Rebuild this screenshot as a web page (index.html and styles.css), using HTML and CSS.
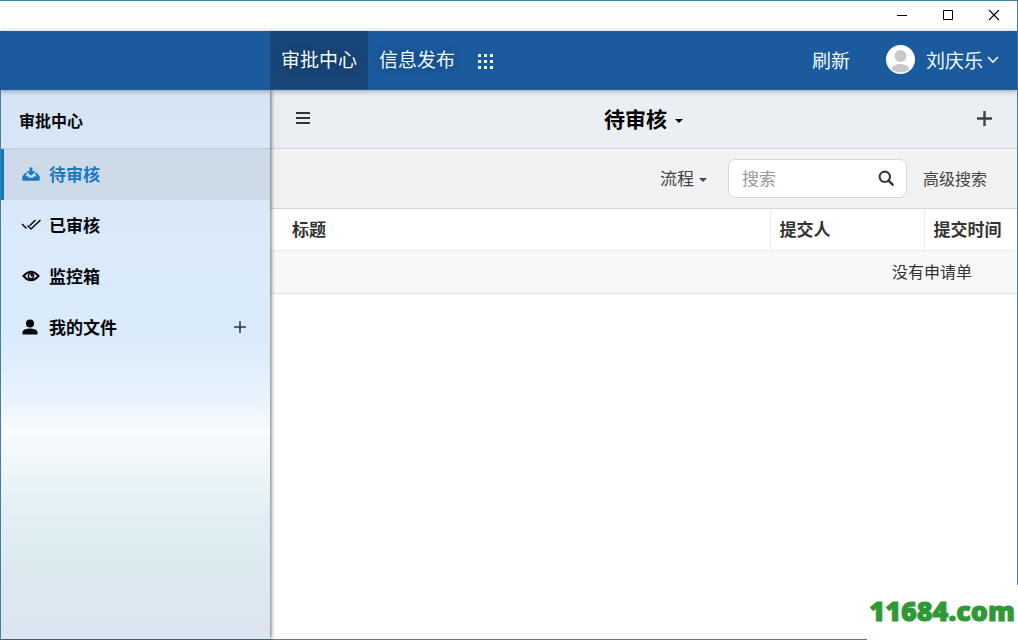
FILE: index.html
```html
<!DOCTYPE html>
<html lang="zh-CN">
<head>
<meta charset="utf-8">
<title>审批中心</title>
<link rel="stylesheet" href="styles.css">
</head>
<body>
<div class="window">
  <div class="titlebar">
    <button class="win-btn" aria-label="最小化"><svg width="12" height="12" viewBox="0 0 12 12"><path d="M1 6.500h10" stroke="#000" fill="none"/></svg></button>
    <button class="win-btn" aria-label="最大化"><svg width="12" height="12" viewBox="0 0 12 12"><path d="M1.500 1.500h9v9h-9z" stroke="#000" fill="none"/></svg></button>
    <button class="win-btn" aria-label="关闭"><svg width="12" height="12" viewBox="0 0 12 12"><path d="M1 1l10 10M11 1L1 11" stroke="#000" stroke-width="1.100" fill="none"/></svg></button>
  </div>
  <header class="navbar">
    <nav class="tabs">
      <a class="tab active" href="#">审批中心</a>
      <a class="tab" href="#">信息发布</a>
      <button class="apps" aria-label="应用"><svg width="15" height="15" viewBox="0 0 15 15" fill="#f0f9ff"><path d="M0 0h3v3H0zM6 0h3v3H6zM12 0h3v3h-3zM0 6h3v3H0zM6 6h3v3H6zM12 6h3v3h-3zM0 12h3v3H0zM6 12h3v3H6zM12 12h3v3h-3z"/></svg></button>
    </nav>
    <div class="user-area">
      <button class="refresh">刷新</button>
      <button class="user">
        <svg width="29" height="29" viewBox="0 0 29 29"><defs><clipPath id="face"><circle cx="14.500" cy="14.500" r="13"/></clipPath></defs><circle cx="14.500" cy="14.500" r="14.500" fill="#fff"/><g clip-path="url(#face)" fill="#c8c8c8"><circle cx="14.500" cy="11" r="6"/><ellipse cx="14.500" cy="25.500" rx="9.500" ry="6.500"/></g></svg>
        <span class="user-name">刘庆乐</span>
        <svg width="12" height="8" viewBox="0 0 12 8"><path d="M1 1l5 5 5-5" stroke="#f0f9ff" stroke-width="1.600" fill="none"/></svg>
      </button>
    </div>
  </header>
  <div class="body">
    <aside class="sidebar">
      <h2 class="side-title">审批中心</h2>
      <nav class="menu">
        <a class="item active" href="#"><svg class="icon" viewBox="0 0 20 18" fill="currentColor"><path d="M8.600 2.500h2.800v3.700h3.400L10 10.800 5.200 6.200h3.400z"/><path d="M4.800 7.500L1.300 11.300v3.500q0 1 1 1h15.400q1 0 1-1v-3.500L15.200 7.500l-1.500 1.300 2.200 2.500h-2.600L12 12.800H8l-1.300-1.500H4.100l2.200-2.500z"/></svg><span>待审核</span></a>
        <a class="item" href="#"><svg class="icon" viewBox="0 0 20 18" fill="none" stroke="currentColor" stroke-width="1.500"><path d="M1 8l4.500 4.500M6.500 9.500l3.500 3.500L19.500 4M8.700 9.700L14.500 4"/></svg><span>已审核</span></a>
        <a class="item" href="#"><svg class="icon" viewBox="0 0 20 18"><path d="M2.500 9q7.500-8.500 15 0q-7.500 8.500-15 0z" fill="none" stroke="currentColor" stroke-width="2"/><circle cx="10" cy="9" r="2.700" fill="none" stroke="currentColor" stroke-width="1.300"/><circle cx="10.800" cy="8.200" r="1.300" fill="currentColor"/></svg><span>监控箱</span></a>
        <a class="item" href="#"><svg class="icon" viewBox="0 0 20 18" fill="currentColor"><circle cx="9" cy="5.500" r="4"/><path d="M1.500 16.500v-2c0-3 5-3.900 7.500-3.900s7.500.9 7.500 3.900v2z"/></svg><span>我的文件</span><svg class="item-plus" viewBox="0 0 12 12"><path d="M6 0v12M0 6h12" stroke="#333" stroke-width="1.500"/></svg></a>
      </nav>
    </aside>
    <main class="main">
      <div class="main-head">
        <button class="icon-btn" aria-label="菜单"><svg width="14" height="12" viewBox="0 0 14 12"><path d="M0 1h14M0 6h14M0 11h14" stroke="#333" stroke-width="2"/></svg></button>
        <button class="title">待审核<svg class="caret" viewBox="0 0 8 4"><path d="M0 0h8L4 4z" fill="currentColor"/></svg></button>
        <button class="icon-btn" aria-label="新建"><svg width="15" height="15" viewBox="0 0 15 15"><path d="M7.500 0v15M0 7.500h15" stroke="#3f4347" stroke-width="2.400"/></svg></button>
      </div>
      <form class="filters">
        <label class="flow"><select class="flow-select" aria-label="流程"><option>流程</option></select><svg class="caret" viewBox="0 0 8 4"><path d="M0 0h8L4 4z" fill="currentColor"/></svg></label>
        <div class="search">
          <input class="search-input" type="text" placeholder="搜索" aria-label="搜索">
          <button class="search-btn" type="button" aria-label="搜索"><svg width="16" height="16" viewBox="0 0 16 16" fill="none" stroke="#3a3a3a"><circle cx="6.800" cy="6.800" r="5.200" stroke-width="2.100"/><path d="M10.600 10.600l4 4" stroke-width="2.600" stroke-linecap="round"/></svg></button>
        </div>
        <a class="advanced" href="#">高级搜索</a>
      </form>
      <table class="grid">
        <thead><tr><th>标题</th><th class="col-person">提交人</th><th class="col-time">提交时间</th></tr></thead>
        <tbody><tr><td class="empty" colspan="3">没有申请单</td></tr></tbody>
      </table>
    </main>
  </div>
  <div class="watermark">11684.com</div>
</div>
</body>
</html>
```
FILE: styles.css
```css
* { box-sizing: border-box; }
body {
  margin: 0;
  font-family: "Noto Sans CJK SC", sans-serif;
  font-size: 17px;
  line-height: 24px;
  color: #333;
}
button, input, select { font: inherit; color: inherit; }
button { padding: 0; border: 0; background: none; }
a { color: inherit; text-decoration: none; }
svg { display: block; flex: none; }

.window {
  position: relative;
  display: flex;
  flex-direction: column;
  min-height: 100vh;
  border: 1px solid #43809f;
  border-left: 0;
  background: #fff;
}
.titlebar { display: flex; justify-content: flex-end; height: 30px; background: #fff; }
.win-btn { display: flex; align-items: center; justify-content: center; width: 46px; height: 28px; }

.navbar {
  display: flex;
  justify-content: space-between;
  height: 59px;
  padding-left: 270px;
  background: #1b5a9d;
  border-bottom: 1px solid #2b568d;
  color: #f0f9ff;
  font-size: 19px;
  position: relative;
  z-index: 2;
  box-shadow: 0 1px 5px rgba(50, 70, 110, .5);
  text-shadow: 0 1px 8px rgba(0, 0, 0, .4);
}
.tabs { display: flex; }
.tab { display: flex; align-items: center; padding: 0 11px 2px; }
.tab.active { background: #194679; }
.apps { display: flex; align-items: center; padding: 2px 12px 0; }
.user-area { display: flex; align-items: center; gap: 36px; padding: 0 18px 1px 0; }
.user { display: flex; align-items: center; gap: 11px; }
.user-name { margin-right: -7px; }

.body { display: flex; flex: 1; }
.sidebar {
  position: relative;
  z-index: 1;
  width: 270px;
  flex: none;
  border-left: 1px solid #43809f;
  background: linear-gradient(#d5e4f5 0, #d9e9fa 20%, #daebfb 46%, #e7f2fd 55%, #f8fbff 62%, #f0f7fa 68%, #e3f0f5 76%, #dcebf0 85%, #dce7ef 94%, #dce5f0 100%);
  box-shadow: 1px 0 4px rgba(0, 0, 0, .6);
  color: #05060c;
}
.side-title {
  margin: 0;
  padding: 18px 18px 16px;
  border-bottom: 1px solid #c3cedb;
  font-size: 16px;
  line-height: 24px;
  font-weight: 700;
}
.menu { display: flex; flex-direction: column; font-weight: 700; }
.item {
  display: flex;
  align-items: center;
  gap: 8px;
  height: 51px;
  padding: 0 24px 2px 20px;
}
.item.active {
  padding-left: 17px;
  border-left: 3px solid #0b78cf;
  background: #cddae8;
  color: #1c78c3;
}
.icon { width: 20px; height: 18px; }
.item-plus { width: 12px; height: 12px; margin-left: auto; }

.main { flex: 1; min-width: 0; }
.main-head {
  display: flex;
  align-items: center;
  justify-content: space-between;
  height: 59px;
  padding: 0 25px 2px 26px;
  border-bottom: 1px solid #d2d9e2;
  background: #ebeef3;
}
.title { display: flex; align-items: center; gap: 8px; font-size: 21px; font-weight: 700; color: #000; }
.caret { width: 8px; height: 4px; margin-top: 5px; }
.filters {
  display: flex;
  align-items: center;
  justify-content: flex-end;
  height: 60px;
  padding: 0 30px 0 0;
  border-bottom: 1px solid #d2d6db;
  background: #f2f2f2;
  color: #444;
}
.flow { display: flex; align-items: center; gap: 5px; margin-right: 21px; padding-bottom: 2px; }
.flow-select { appearance: none; padding: 0; border: 0; background: none; }
.advanced { padding-bottom: 2px; font-size: 16px; }
.search {
  display: flex;
  align-items: center;
  width: 179px;
  height: 39px;
  margin-right: 16px;
  padding: 0 12px 1px 13px;
  border: 1px solid #d3d8de;
  border-radius: 7px;
  background: #fff;
}
.search-input { flex: 1; min-width: 0; padding: 0; border: 0; outline: 0; background: none; }
.search-input::placeholder { color: #999; }

.grid { width: 100%; border-collapse: collapse; table-layout: fixed; }
.grid th {
  height: 41px;
  padding: 0 9px 1px;
  border-bottom: 1px solid #ececec;
  text-align: left;
  font-weight: 700;
}
.grid th:first-child { padding-left: 22px; }
.grid th + th { border-left: 1px solid #ececec; }
.col-person { width: 154px; }
.col-time { width: 93px; }
.grid .empty {
  height: 43px;
  padding: 0 45px 1px 0;
  border-bottom: 1px solid #e4e4e4;
  background: #f8f8f8;
  font-size: 16px;
  text-align: right;
}

.watermark {
  position: absolute;
  right: -1px;
  bottom: -1px;
  z-index: 3;
  padding: 2px 3px 5px 2px;
  background: #fff;
  color: #2f9a35;
  font-family: "Open Sans", sans-serif;
  font-size: 27px;
  font-weight: 800;
  line-height: 48px;
  -webkit-text-stroke: 1px #2f9a35;
}
```
